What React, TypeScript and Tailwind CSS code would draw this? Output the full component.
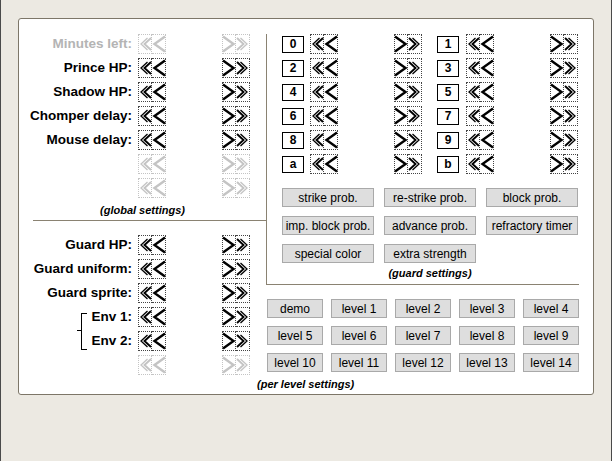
import React from 'react';

type ArrowProps = { dir: 'left' | 'right'; off?: boolean };

const Arrows = ({ dir, off }: ArrowProps) => {
  const c = off ? '#c4c4c4' : '#000000';
  const dot = off ? 'border-[#c4c4c4]' : 'border-[#444444]';
  return (
    <div className="relative flex w-[28px] h-[20px] shrink-0">
      <div className={`w-[14px] h-[20px] border border-dotted ${dot}`} />
      <div className={`w-[14px] h-[20px] border border-l-0 border-dotted ${dot}`} />
      <svg className="absolute inset-0" width="28" height="20" viewBox="0 0 28 20" fill="none" stroke={c} strokeLinejoin="miter">
        {dir === 'left' ? (
          <>
            <polyline points="9.5,4 3,10 9.5,16" strokeWidth="1.3" />
            <polyline points="13,4 6.5,10 13,16" strokeWidth="1.9" />
            <polyline points="27,2.5 16.5,10 27,17.5" strokeWidth="2.4" />
          </>
        ) : (
          <>
            <polyline points="1,2.5 11.5,10 1,17.5" strokeWidth="2.4" />
            <polyline points="15,4 21.5,10 15,16" strokeWidth="1.9" />
            <polyline points="18.5,4 25,10 18.5,16" strokeWidth="1.3" />
          </>
        )}
      </svg>
    </div>
  );
};

const Pair = ({ off }: { off?: boolean }) => (
  <div className="flex">
    <Arrows dir="left" off={off} />
    <div className="w-[56px]" />
    <Arrows dir="right" off={off} />
  </div>
);

const Row = ({ label, off }: { label?: string; off?: boolean }) => (
  <div className="flex items-center h-[20px]">
    <div className={`w-[113px] text-right text-[13.5px] font-bold leading-[20px] whitespace-nowrap ${off ? 'text-[#b4b4b4]' : 'text-black'}`}>
      {label}
    </div>
    <div className="ml-[6px]">
      <Pair off={off} />
    </div>
  </div>
);

const Box = ({ t, ml }: { t: string; ml: string }) => (
  <div className={`${ml} w-[22px] h-[17px] border border-black flex items-center justify-center text-[12px] font-bold leading-none`}>{t}</div>
);

const GuardRow = ({ a, b }: { a: string; b: string }) => (
  <div className="flex items-center h-[20px]">
    <Box t={a} ml="ml-0" />
    <div className="ml-[6px]">
      <Pair />
    </div>
    <Box t={b} ml="ml-[15px]" />
    <div className="ml-[7px]">
      <Pair />
    </div>
  </div>
);

const Btn = ({ text, w }: { text: string; w: string }) => (
  <div className={`${w} h-[19px] bg-[#dedede] border border-[#a9a9a9] flex items-center justify-center text-[12px] text-black leading-none whitespace-nowrap`}>
    {text}
  </div>
);

const GUARD_BTNS = ['strike prob.', 're-strike prob.', 'block prob.', 'imp. block prob.', 'advance prob.', 'refractory timer', 'special color', 'extra strength'];
const LEVELS = ['demo', ...Array.from({ length: 14 }, (_, i) => `level ${i + 1}`)];

export default function App() {
  return (
    <div className="w-[612px] h-[461px] bg-[#ece9e2] border-x border-[#4a4a4a] pt-[18px] pl-[17px] font-['Liberation_Sans',Arial,sans-serif] text-black">
      <div className="w-[576px] h-[377px] bg-white border border-[#7d7668] rounded-[3px] flex">
        {/* left column */}
        <div className="w-[247px] pt-[15px] flex flex-col">
          <div className="flex flex-col gap-[4px]">
            <Row label="Minutes left:" off />
            <Row label="Prince HP:" />
            <Row label="Shadow HP:" />
            <Row label="Chomper delay:" />
            <Row label="Mouse delay:" />
            <Row off />
            <Row off />
          </div>
          <div className="mt-[6px] text-center text-[11px] leading-[12px] font-bold italic">(global settings)</div>
          <div className="mt-[4px] ml-[14px] h-px bg-[#8a8272]" />
          <div className="mt-[14px] flex flex-col gap-[4px]">
            <Row label="Guard HP:" />
            <Row label="Guard uniform:" />
            <Row label="Guard sprite:" />
            <div className="relative flex flex-col gap-[4px]">
              <div className="absolute left-[62px] top-[6px] w-[6px] h-[37px] border-l border-y border-black" />
              <div className="absolute left-[58px] top-[23px] w-[4px] h-px bg-black" />
              <Row label="Env 1:" />
              <Row label="Env 2:" />
            </div>
            <Row off />
          </div>
        </div>

        {/* right column */}
        <div className="pt-[15px] flex flex-col">
          <div className="w-[313px] h-[251px] border-l border-b border-[#8a8272] pl-[15px] flex flex-col">
            <div className="flex flex-col gap-[4px]">
              <GuardRow a="0" b="1" />
              <GuardRow a="2" b="3" />
              <GuardRow a="4" b="5" />
              <GuardRow a="6" b="7" />
              <GuardRow a="8" b="9" />
              <GuardRow a="a" b="b" />
            </div>
            <div className="mt-[14px] grid grid-cols-[92px_92px_92px] gap-x-[10px] gap-y-[9px]">
              {GUARD_BTNS.map((t) => (
                <Btn key={t} text={t} w="w-[92px]" />
              ))}
            </div>
            <div className="mt-[4px] w-[296px] text-center text-[11px] leading-[12px] font-bold italic">(guard settings)</div>
          </div>
          <div className="mt-[14px] ml-[1px] grid grid-cols-[56px_56px_56px_56px_56px] gap-x-[8px] gap-y-[8px]">
            {LEVELS.map((t) => (
              <Btn key={t} text={t} w="w-[56px]" />
            ))}
          </div>
          <div className="mt-[6px] -ml-[9px] text-[11px] leading-[12px] font-bold italic">(per level settings)</div>
        </div>
      </div>
    </div>
  );
}
